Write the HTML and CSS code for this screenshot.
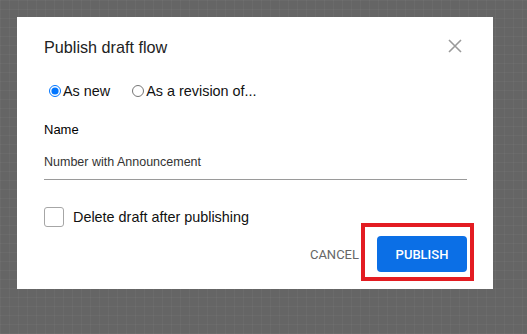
FILE: index.html
```html
<!DOCTYPE html>
<html lang="en">
<head>
    <meta charset="UTF-8" />
    <meta name="viewport" content="width=device-width, initial-scale=1" />
    <title>Publish draft flow</title>
    <link rel="stylesheet" href="styles.css">
</head>
<body>
    <div class="dialog">
        <div class="dialog-header">
            <h1>Publish draft flow</h1>
            <button class="close" type="button" aria-label="Close">
                <svg width="14" height="14" viewBox="0 0 14 14">
                    <path d="M1 1 L13 13 M13 1 L1 13" stroke="#9a9a9a" stroke-width="1.6" fill="none" />
                </svg>
            </button>
        </div>

        <div class="radios">
            <label><input type="radio" name="mode" checked /> As new</label>
            <label><input type="radio" name="mode" /> As a revision of...</label>
        </div>

        <label class="field-label" for="name">Name</label>
        <input class="field" type="text" id="name" value="Number with Announcement" />

        <label class="check">
            <span class="box"></span>
            Delete draft after publishing
        </label>

        <div class="actions">
            <button class="cancel" type="button">CANCEL</button>
            <button class="publish" type="button">PUBLISH</button>
        </div>
    </div>
</body>
</html>
```

FILE: styles.css
```css
html, body {
    margin: 0;
    height: 100%;
}
body {
    font-family: "Liberation Sans", Arial, sans-serif;
    background-color: #656565;
    background-image:
        linear-gradient(rgba(255,255,255,0.035) 1px, transparent 1px),
        linear-gradient(90deg, rgba(255,255,255,0.035) 1px, transparent 1px);
    background-size: 9px 9px;
    padding: 17px;
    box-sizing: border-box;
}
.dialog {
    width: 476px;
    height: 272px;
    box-sizing: border-box;
    padding: 18px 26px 0 27px;
    background-color: #ffffff;
}
.dialog-header {
    display: flex;
    justify-content: space-between;
    align-items: center;
    height: 24px;
}
h1 {
    margin: 0;
    font-size: 16.2px;
    font-weight: normal;
    line-height: 24px;
    color: #222;
}
.close {
    border: none;
    background: none;
    padding: 0;
    margin: -3px 5px 0 0;
    width: 14px;
    height: 14px;
    display: flex;
    cursor: pointer;
}
.radios {
    display: flex;
    gap: 17px;
    margin-top: 22px;
    font-size: 14.4px;
    line-height: 20px;
    color: #111;
}
.radios label {
    display: flex;
    align-items: center;
}
.radios input {
    margin: 0 2px 0 5px;
    width: 12px;
    height: 12px;
}
.field-label {
    display: block;
    margin-top: 21px;
    font-size: 13px;
    line-height: 16px;
    color: #000;
    font-weight: 500;
}
.field {
    display: block;
    width: 100%;
    box-sizing: border-box;
    margin-top: 16px;
    padding: 0 0 9px 0;
    border: none;
    border-bottom: 1px solid #9a9a9a;
    font-family: "Liberation Sans", Arial, sans-serif;
    font-size: 12.5px;
    line-height: 16px;
    color: #333;
    outline: none;
}
.check {
    display: flex;
    align-items: center;
    gap: 9px;
    margin-top: 27px;
    font-size: 14.4px;
    color: #111;
}
.box {
    width: 20px;
    height: 20px;
    box-sizing: border-box;
    border: 1px solid #a6a6a6;
    border-radius: 3px;
}
.actions {
    display: flex;
    justify-content: flex-end;
    align-items: center;
    gap: 18px;
    margin-top: 9px;
}
.actions button {
    font-family: Roboto, sans-serif;
    font-size: 13px;
    border: none;
    cursor: pointer;
}
.cancel {
    background: none;
    color: #666;
    padding: 0;
}
.publish {
    position: relative;
    width: 90px;
    height: 36px;
    background-color: #0b6fe6;
    color: #fff;
    font-weight: 500;
    border-radius: 4px;
}
.publish::after {
    content: "";
    position: absolute;
    left: -16px;
    right: -7px;
    top: -13px;
    bottom: -9px;
    border: 4px solid #e31c22;
    pointer-events: none;
}
```
